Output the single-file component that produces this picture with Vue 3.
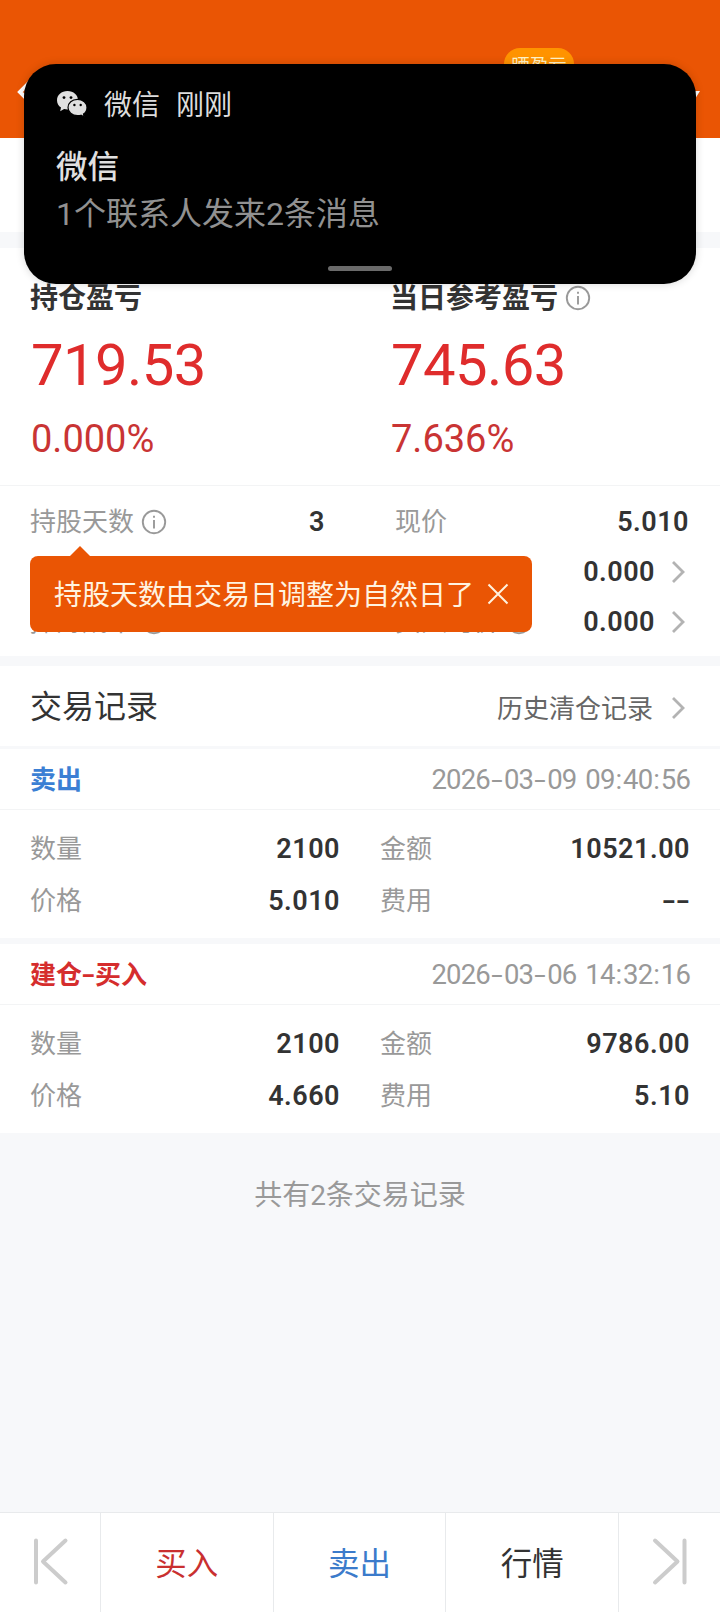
<script setup>
const records = [
  {
    kind: 'sell', title: '卖出', time: '2026-03-09 09:40:56',
    rows: [['数量', '2100', '金额', '10521.00'], ['价格', '5.010', '费用', '--']],
  },
  {
    kind: 'buy', title: '建仓-买入', time: '2026-03-06 14:32:16',
    rows: [['数量', '2100', '金额', '9786.00'], ['价格', '4.660', '费用', '5.10']],
  },
]

// Splits text so that digits and dashes can be spaced separately.
const parts = (text) =>
  text.split(/([-: ])/).filter((t) => t !== '').map((t) => ({
    t: t === ' ' ? '\u00a0' : t,
    c: t === '-' ? 'dash' : t === ':' ? 'colon' : t === ' ' ? 'gap' : 'num',
  }))
</script>

<template>
  <div class="page">
    <header class="header">
      <svg class="back" width="24" height="34" viewBox="0 0 24 34"><path d="M20 2L5 17L20 32" fill="none" stroke="#fff" stroke-width="4" /></svg>
      <div class="badge">晒盈亏</div>
      <svg class="caret" width="20" height="16" viewBox="0 0 20 16"><path d="M0 0H20L10 16Z" fill="#fff" /></svg>
    </header>
    <div class="blank"></div>
    <div class="band band-top"></div>

    <section class="profit">
      <div class="profit-col">
        <div class="profit-label">持仓盈亏</div>
        <div class="profit-big">719.53</div>
        <div class="profit-pct">0.000%</div>
      </div>
      <div class="profit-col">
        <div class="profit-label">
          当日参考盈亏
          <svg class="info" viewBox="0 0 26 26"><circle cx="13" cy="13" r="11.2" /><path d="M13 11V19.5" /><path d="M13 6.7V8.7" /></svg>
        </div>
        <div class="profit-big">745.63</div>
        <div class="profit-pct">7.636%</div>
      </div>
    </section>

    <section class="details">
      <div class="detail-row">
        <div class="cell left">
          <span class="label">持股天数<svg class="info" viewBox="0 0 26 26"><circle cx="13" cy="13" r="11.2" /><path d="M13 11V19.5" /><path d="M13 6.7V8.7" /></svg></span>
          <span class="value">3</span>
        </div>
        <div class="cell right"><span class="label">现价</span><span class="value">5.010</span></div>
      </div>
      <div class="detail-row">
        <div class="cell left"></div>
        <div class="cell right">
          <span class="label"></span>
          <span class="value linked">0.000<svg class="chev" viewBox="0 0 14 24"><path d="M2 2L12 12L2 22" /></svg></span>
        </div>
      </div>
      <div class="detail-row">
        <div class="cell left">
          <span class="label">摊薄成本<svg class="info" viewBox="0 0 26 26"><circle cx="13" cy="13" r="11.2" /></svg></span>
        </div>
        <div class="cell right">
          <span class="label">买入均价<svg class="info" viewBox="0 0 26 26"><circle cx="13" cy="13" r="11.2" /></svg></span>
          <span class="value linked">0.000<svg class="chev" viewBox="0 0 14 24"><path d="M2 2L12 12L2 22" /></svg></span>
        </div>
      </div>
      <div class="tip">
        <span>持股天数由交易日调整为自然日了</span>
        <svg width="22" height="22" viewBox="0 0 22 22"><path d="M1.5 1.5L20.5 20.5M20.5 1.5L1.5 20.5" fill="none" stroke="#fff3e0" stroke-width="2" /></svg>
      </div>
    </section>

    <div class="band band-mid"></div>
    <div class="section-head">
      <span class="section-title">交易记录</span>
      <span class="history"><span>历史清仓记录</span><svg class="chev" viewBox="0 0 14 24"><path d="M2 2L12 12L2 22" /></svg></span>
    </div>

    <section v-for="r in records" :key="r.time" class="record" :class="r.kind">
      <div class="record-head">
        <span class="record-title"><span v-for="(p, i) in parts(r.title)" :key="i" :class="p.c">{{ p.t }}</span></span>
        <span class="time"><span v-for="(p, i) in parts(r.time)" :key="i" :class="p.c">{{ p.t }}</span></span>
      </div>
      <div class="record-body">
        <div v-for="row in r.rows" :key="row[0]" class="record-row">
          <span class="label">{{ row[0] }}</span>
          <span class="value">{{ row[1] }}</span>
          <span class="label">{{ row[2] }}</span>
          <span class="value">
            <template v-if="row[3] === '--'"><span v-for="n in 2" :key="n" class="dash">-</span></template>
            <template v-else>{{ row[3] }}</template>
          </span>
        </div>
      </div>
    </section>

    <div class="summary">共有2条交易记录</div>

    <nav class="tabs">
      <div class="tab edge"><svg width="40" height="50" viewBox="0 0 40 50"><path d="M6 4.5V46.5M35.5 4.5L13 25.5L35.5 46.5" /></svg></div>
      <div class="tab red">买入</div>
      <div class="tab blue">卖出</div>
      <div class="tab">行情</div>
      <div class="tab edge last"><svg width="40" height="50" viewBox="0 0 40 50"><path d="M34.5 4.5V46.5M5 4.5L27.5 25.5L5 46.5" /></svg></div>
    </nav>

    <aside class="notice">
      <div class="notice-app">
        <svg width="32" height="28" viewBox="0 0 32 28">
          <path d="M11.5 1C5.4 1 1 5 1 10.2C1 13.2 2.5 15.9 5 17.6L4.2 21.2L8.1 19.1C9.2 19.4 10.3 19.6 11.5 19.6C17.6 19.6 22 15.5 22 10.2C22 5 17.6 1 11.5 1Z" fill="#e0e0e0" />
          <path d="M21.5 9.4C16 9.4 12 13 12 17.5C12 22.1 16 25.7 21.5 25.7C22.8 25.7 24 25.5 25 25.2L28.3 27L27.5 24.1C29.8 22.6 31 20.2 31 17.5C31 13 27 9.4 21.5 9.4Z" fill="#e0e0e0" stroke="#000" stroke-width="1.2" />
          <circle cx="8" cy="7.6" r="1.4" /><circle cx="15" cy="7.6" r="1.4" />
          <circle cx="18.4" cy="15" r="1.2" /><circle cx="24.7" cy="15" r="1.2" />
        </svg>
        <span>微信</span><span class="when">刚刚</span>
      </div>
      <div class="notice-title">微信</div>
      <div class="notice-text">1个联系人发来2条消息</div>
      <div class="handle"></div>
    </aside>
  </div>
</template>

<style>
body { margin: 0; background: #f7f8fa; }
</style>

<style scoped>
.page {
  position: relative;
  display: flex;
  flex-direction: column;
  box-sizing: border-box;
  width: 720px;
  height: 1612px;
  overflow: hidden;
  background: #f7f8fa;
  color: #333;
  font-family: Roboto, "Noto Sans CJK SC", sans-serif;
  white-space: nowrap;
}
.page > * { flex-shrink: 0; }
.header {
  display: flex;
  align-items: flex-start;
  justify-content: space-between;
  box-sizing: border-box;
  height: 138px;
  padding: 48px 20px 0 15px;
  background: #ea5504;
}
.back { margin-top: 27px; }
.badge {
  box-sizing: border-box;
  width: 70px;
  height: 32px;
  margin-left: 465px;
  margin-right: auto;
  border-radius: 16px;
  background: #ff9300;
  color: #fff3c8;
  font-size: 18.5px;
  line-height: 36px;
  text-align: center;
}
.caret { margin-top: 43px; }
.blank { height: 94px; background: #fff; }
.band { background: #f7f8fa; }
.band-top { height: 16px; }
.band-mid { height: 10px; }
.profit {
  display: flex;
  box-sizing: border-box;
  height: 238px;
  padding: 34px 0 0 30px;
  background: #fff;
  border-bottom: 1px solid #f3f4f5;
}
.profit-col { width: 360px; flex-shrink: 0; }
.profit-label {
  display: flex;
  align-items: center;
  height: 34px;
  font-size: 28px;
  line-height: 34px;
  font-weight: 600;
}
.profit-label .info { margin-left: 7px; margin-bottom: 3px; }
.profit-big {
  height: 64px;
  margin-top: 17px;
  padding-left: 1px;
  color: #df2c2c;
  font-size: 58px;
  line-height: 64px;
  letter-spacing: -0.6px;
}
.profit-pct {
  height: 44px;
  margin-top: 20px;
  padding-left: 1px;
  color: #c93434;
  font-size: 38px;
  line-height: 44px;
}
.info {
  width: 26px;
  height: 26px;
  flex-shrink: 0;
  fill: none;
  stroke: #999;
  stroke-width: 1.9;
}
.details {
  position: relative;
  box-sizing: border-box;
  height: 170px;
  padding: 11px 0 0 30px;
  background: #fff;
}
.detail-row { display: flex; height: 50px; }
.cell { display: flex; align-items: center; justify-content: space-between; }
.cell.left { width: 295px; }
.cell.right { width: 294px; margin-left: 70px; }
.label { display: flex; align-items: center; color: #999; font-size: 26px; line-height: 36px; }
.label .info { margin-left: 7px; margin-bottom: 1px; }
.value { font-size: 27px; line-height: 36px; font-weight: 600; letter-spacing: 0.5px; }
.linked { display: flex; align-items: center; }
.chev {
  width: 14px;
  height: 24px;
  margin-left: 16px;
  fill: none;
  stroke: #b3b3b3;
  stroke-width: 2.8;
}
.linked .chev { margin-right: 4px; margin-bottom: 1px; }
.tip {
  position: absolute;
  top: 70px;
  left: 30px;
  display: flex;
  align-items: center;
  box-sizing: border-box;
  width: 502px;
  height: 76px;
  padding-left: 24px;
  border-radius: 8px;
  background: #ea5504;
  color: #fff3e0;
  font-size: 28px;
}
.tip span { padding-bottom: 3px; }
.tip svg { margin-left: 13px; }
.tip::before {
  content: "";
  position: absolute;
  top: -10px;
  left: 40px;
  border: 10px solid transparent;
  border-top: 0;
  border-bottom-color: #ea5504;
}
.section-head {
  display: flex;
  align-items: center;
  justify-content: space-between;
  box-sizing: border-box;
  height: 83px;
  padding: 1px 35px 0 30px;
  background: #fff;
  border-bottom: 3px solid #f7f8fa;
}
.section-title { padding-bottom: 5px; font-size: 32px; }
.history { display: flex; align-items: center; padding-top: 3px; color: #666; font-size: 26px; }
.history span { padding-bottom: 4px; }
.history .chev { margin-left: 18px; }
.record { background: #fff; }
.record.sell { border-bottom: 6px solid #f7f8fa; }
.record-head {
  display: flex;
  align-items: center;
  justify-content: space-between;
  box-sizing: border-box;
  height: 61px;
  padding: 1px 30px 0;
  border-bottom: 1px solid #f3f4f5;
}
.record-title { padding-bottom: 4px; font-size: 26px; font-weight: 700; }
.sell .record-title { color: #3b7fd4; }
.buy .record-title { color: #d52d2d; }
.time { display: flex; color: #999; font-size: 27.5px; letter-spacing: -0.85px; }
.dash { display: inline-block; width: 14px; letter-spacing: 0; text-align: center; transform: scaleX(1.5); }
.record-title .dash { width: 13px; }
.colon { display: inline-block; width: 8.5px; letter-spacing: 0; text-align: center; }
.gap { display: inline-block; width: 9px; }
.record-body { box-sizing: border-box; height: 128px; padding: 13px 30px 0; }
.record-row {
  display: grid;
  grid-template-columns: 60px 250px 101px 1fr;
  align-items: center;
  height: 52px;
}
.record-row .value { text-align: right; }
.record-row .label:nth-child(3) { margin-left: 40px; }
.summary {
  padding-top: 41px;
  color: #999;
  font-size: 28px;
  line-height: 44px;
  text-align: center;
}
.tabs {
  display: flex;
  box-sizing: border-box;
  height: 100px;
  margin-top: auto;
  border-top: 1px solid #e8eaec;
  background: #fff;
}
.tab {
  display: flex;
  align-items: center;
  justify-content: center;
  flex: 1;
  box-sizing: border-box;
  padding-bottom: 4px;
  border-right: 1px solid #e8eaec;
  font-size: 31.5px;
}
.tab.edge { flex: 0 0 101px; padding: 0 0 4px; }
.tab.last { border-right: 0; }
.tab.edge path { fill: none; stroke: #ccc; stroke-width: 4; stroke-linecap: round; stroke-linejoin: round; }
.red { color: #c93030; }
.blue { color: #3b7bcb; }
.notice {
  position: absolute;
  top: 64px;
  left: 24px;
  box-sizing: border-box;
  width: 672px;
  height: 220px;
  padding: 20px 32px 0;
  border-radius: 32px;
  background: #000;
  box-shadow: 0 0 8px rgba(0, 0, 0, 0.16);
}
.notice-app { display: flex; align-items: center; height: 40px; color: #ddd; font-size: 28px; line-height: 40px; }
.notice-app span { margin-left: 16px; padding-top: 3px; }
.notice-title { height: 44px; margin-top: 22px; color: #e0e0e0; font-size: 31.5px; font-weight: 500; line-height: 44px; }
.notice-text { height: 44px; margin-top: 2px; color: #919191; font-size: 32px; line-height: 44px; }
.handle { width: 64px; height: 5px; margin: 30px auto 0; border-radius: 3px; background: #6a6a6a; }
</style>
